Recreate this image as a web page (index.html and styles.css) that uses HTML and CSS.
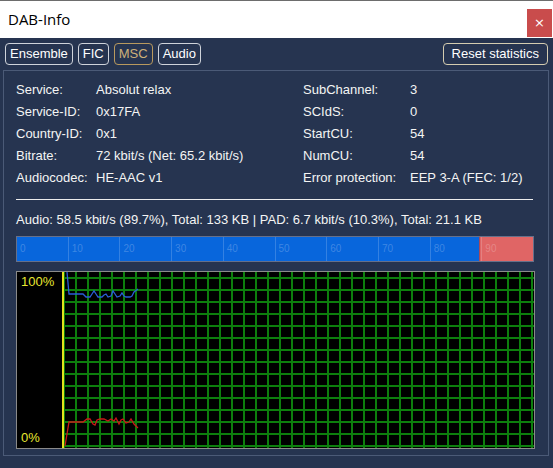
FILE: index.html
```html
<!DOCTYPE html>
<html>
<head>
<meta charset="utf-8">
<link rel="stylesheet" href="styles.css">
</head>
<body>
<div class="window">
  <div class="titlebar">
    <span class="title">DAB-Info</span>
    <span class="close">×</span>
  </div>
  <div class="toolbar">
    <div class="tabs">
      <span class="btn">Ensemble</span>
      <span class="btn">FIC</span>
      <span class="btn active">MSC</span>
      <span class="btn">Audio</span>
    </div>
    <span class="btn reset">Reset statistics</span>
  </div>
  <div class="panel">
    <div class="info">
      <span>Service:</span><span>Absolut relax</span><span>SubChannel:</span><span>3</span>
      <span>Service-ID:</span><span>0x17FA</span><span>SCIdS:</span><span>0</span>
      <span>Country-ID:</span><span>0x1</span><span>StartCU:</span><span>54</span>
      <span>Bitrate:</span><span>72 kbit/s (Net: 65.2 kbit/s)</span><span>NumCU:</span><span>54</span>
      <span>Audiocodec:</span><span>HE-AAC v1</span><span>Error protection:</span><span>EEP 3-A (FEC: 1/2)</span>
    </div>
    <div class="sep"></div>
    <div class="stats">Audio: 58.5 kbit/s (89.7%), Total: 133 KB | PAD: 6.7 kbit/s (10.3%), Total: 21.1 KB</div>
    <div class="bar">
      <div class="bar-pad" style="width: 10.3%"></div>
      <div class="ticks">
        <span>0</span><span>10</span><span>20</span><span>30</span><span>40</span>
        <span>50</span><span>60</span><span>70</span><span>80</span><span>90</span>
      </div>
    </div>
    <div class="graph">
      <div class="axis">
        <span>100%</span>
        <span>0%</span>
      </div>
      <div class="yline"></div>
      <div class="grid">
        <svg class="plot" width="470" height="176" viewBox="0 0 470 176" shape-rendering="crispEdges">
          <defs>
            <pattern id="gridv" x="11" y="0" width="12" height="176" patternUnits="userSpaceOnUse">
              <rect x="0" y="0" width="2" height="176" fill="#0d7f0d"/>
            </pattern>
            <pattern id="gridh" x="0" y="5" width="470" height="12" patternUnits="userSpaceOnUse">
              <rect x="0" y="0" width="470" height="2" fill="#0d7f0d"/>
            </pattern>
          </defs>
          <rect x="0" y="0" width="470" height="176" fill="url(#gridv)"/>
          <rect x="0" y="0" width="470" height="176" fill="url(#gridh)"/>
          <polyline fill="none" stroke="#2a5ed6" stroke-width="1.3" shape-rendering="auto" points="3,0 5,22 19,22 22,25 26,25 28,22 30,19 32,22 34,25 38,25 40,23 42,22 44,25 47,24 49,19 51,22 53,25 56,24 58,21 60,24 62,25 66,25 68,24 70,20 74,17"/>
          <polyline fill="none" stroke="#c81818" stroke-width="1.3" shape-rendering="auto" points="1,174 5,150 19,150 23,147 26,147 29,152 31,153 33,148 36,147 40,147 44,149 47,147 50,149 52,146 55,152 57,148 59,147 62,151 65,150 67,147 70,152 74,156"/>
        </svg>
      </div>
    </div>
  </div>
</div>
</body>
</html>
```

FILE: styles.css
```css
html, body {
  margin: 0;
  padding: 0;
}
body {
  width: 553px;
  height: 468px;
  overflow: hidden;
  background: #263450;
  font-family: "Liberation Sans", Arial, sans-serif;
  font-size: 13px;
  color: #f4f4f4;
}
.titlebar {
  box-sizing: border-box;
  height: 38px;
  background: #ffffff;
  border-top: 1px solid #6d6d6d;
  display: flex;
  justify-content: space-between;
  align-items: flex-start;
  padding-left: 8px;
}
.title {
  font-family: "Open Sans", "Noto Sans", sans-serif;
  font-size: 15px;
  color: #000;
  line-height: 37px;
}
.close {
  margin-top: 8px;
  margin-right: 1px;
  width: 25px;
  height: 28px;
  background: #c94c4c;
  color: #fff;
  font-family: "DejaVu Sans", sans-serif;
  font-size: 13px;
  line-height: 28px;
  text-align: center;
}
.toolbar {
  display: flex;
  justify-content: space-between;
  padding: 5px 5px 0 5px;
}
.tabs {
  display: flex;
  gap: 5px;
}
.btn {
  box-sizing: border-box;
  height: 22px;
  line-height: 20px;
  padding: 0 4px;
  border: 1px solid #cfd3da;
  border-radius: 4px;
  color: #ffffff;
  white-space: nowrap;
}
.btn.active {
  border-color: #b8995e;
  color: #cdb07a;
}
.btn.reset {
  border-color: #d4ccb0;
  padding: 0 8px;
}
.panel {
  box-sizing: border-box;
  margin: 5px 4px 0 3px;
  height: 386px;
  border: 1px solid #4b5a77;
  padding: 8px 0 0 12px;
}
.info {
  display: grid;
  grid-template-columns: 80px 207px 107px auto;
  line-height: 22px;
  white-space: nowrap;
}
.sep {
  width: 517px;
  height: 1px;
  background: #ececec;
  margin-top: 10px;
}
.stats {
  margin-top: 9px;
  line-height: 22px;
  white-space: nowrap;
}
.bar {
  position: relative;
  box-sizing: border-box;
  margin-top: 5px;
  width: 518px;
  height: 26px;
  border: 1px solid #66708a;
  background: #0866dc;
}
.bar-pad {
  position: absolute;
  top: 0;
  right: 0;
  bottom: 0;
  background: #e06565;
  border-left: 1px solid #a84a5a;
}
.ticks {
  position: absolute;
  inset: 0;
  display: flex;
}
.ticks span {
  flex: 1;
  box-sizing: border-box;
  padding-left: 3px;
  border-left: 1px solid rgba(255, 255, 255, 0.18);
  font-size: 10px;
  line-height: 24px;
  color: rgba(255, 255, 255, 0.22);
}
.ticks span:first-child {
  border-left: none;
}
.graph {
  box-sizing: border-box;
  margin-top: 9px;
  width: 519px;
  height: 178px;
  border: 1px solid #8a8a8a;
  background: #000;
  display: flex;
}
.axis {
  width: 45px;
  box-sizing: border-box;
  padding-left: 4px;
  display: flex;
  flex-direction: column;
  justify-content: space-between;
  color: #e8e830;
  line-height: 20px;
}
.yline {
  width: 2px;
  background: #e2e21c;
}
.grid {
  position: relative;
  flex: 1;
  background: #000;
}
.plot {
  position: absolute;
  left: 0;
  top: 0;
}
```
